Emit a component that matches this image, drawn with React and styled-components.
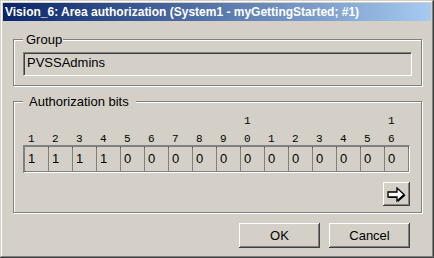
import React from 'react';
import styled, { createGlobalStyle } from 'styled-components';

const GlobalStyle = createGlobalStyle`
  html, body {
    margin: 0;
    padding: 0;
    background: #d4d0c8;
  }
  body {
    font-family: 'Liberation Sans', Arial, sans-serif;
  }
`;

const bits = [1, 1, 1, 1, 0, 0, 0, 0, 0, 0, 0, 0, 0, 0, 0, 0];

// only bits 10 and 16 carry the tens digit above
const upperDigit = (n) => (n === 10 || n === 16 ? '1' : '');
const lowerDigit = (n) => String(n % 10);

// Vision_6 dialog: area authorization
const App = () => {
  return (
    <>
      <GlobalStyle />
      <Window>
        <TitleBar>Vision_6: Area authorization (System1 - myGettingStarted; #1)</TitleBar>
        <Body>
          <GroupBox $pad='12px 9px 9px 9px'>
            <Legend $pad='0 1px 0 3px'>Group</Legend>
            <ReadOnlyField>PVSSAdmins</ReadOnlyField>
          </GroupBox>

          <GroupBox $pad='13px 11px 6px 9px' $mt='15px'>
            <Legend $pad='0 7px 0 6px'>Authorization bits</Legend>
            <BitLabels>
              <LabelRow>
                {bits.map((b, i) => (
                  <BitLabel key={i}>{upperDigit(i + 1)}</BitLabel>
                ))}
              </LabelRow>
              <LabelRow>
                {bits.map((b, i) => (
                  <BitLabel key={i}>{lowerDigit(i + 1)}</BitLabel>
                ))}
              </LabelRow>
            </BitLabels>
            <BitTable>
              {bits.map((b, i) => (
                <BitCell key={i}>{b}</BitCell>
              ))}
            </BitTable>
            <ArrowRow>
              <ArrowButton>
                <svg width='20' height='16' viewBox='0 0 20 16'>
                  <path
                    d='M2 6 H11 V2 L18.5 8.5 L11 15 V11 H2 Z'
                    fill='#000'
                  />
                  <path
                    d='M1 5 H10 V1 L17 7.5 L10 14 V10 H1 Z'
                    fill='#fff'
                    stroke='#000'
                    strokeWidth='1.3'
                    strokeLinejoin='miter'
                  />
                </svg>
              </ArrowButton>
            </ArrowRow>
          </GroupBox>

          <ButtonRow>
            <PushButton>OK</PushButton>
            <PushButton>Cancel</PushButton>
          </ButtonRow>
        </Body>
      </Window>
    </>
  );
};

const Window = styled.div`
  width: 434px;
  height: 258px;
  box-sizing: border-box;
  padding: 3px;
  background: #d4d0c8;
  display: flex;
  flex-direction: column;
  box-shadow: inset -1px -1px #404040, inset 1px 1px #d4d0c8,
    inset -2px -2px #808080, inset 2px 2px #ffffff;
`;

const TitleBar = styled.div`
  height: 18px;
  flex: none;
  padding-left: 2px;
  background: linear-gradient(to right, #0a246a, #a6caf0);
  color: #ffffff;
  font-family: 'Liberation Sans', Arial, sans-serif;
  font-weight: bold;
  font-size: 12px;
  line-height: 18px;
  white-space: nowrap;
  overflow: hidden;
`;

const Body = styled.div`
  flex: 1;
  display: flex;
  flex-direction: column;
  padding: 18px 9px 8px 10px;
`;

const GroupBox = styled.div`
  position: relative;
  margin-top: ${(p) => p.$mt || '0'};
  padding: ${(p) => p.$pad};
  border: 1px solid #808080;
  box-shadow: inset 1px 1px #ffffff, 1px 1px #ffffff;
  display: flex;
  flex-direction: column;
`;

const Legend = styled.span`
  position: absolute;
  top: -9px;
  left: 9px;
  padding: ${(p) => p.$pad};
  background: #d4d0c8;
  color: #000;
  font-size: 13px;
  line-height: 17px;
`;

const ReadOnlyField = styled.div`
  height: 24px;
  box-sizing: border-box;
  padding: 0 3px;
  background: #d4d0c8;
  color: #000;
  font-size: 13px;
  line-height: 20px;
  border-top: 1px solid #808080;
  border-left: 1px solid #808080;
  border-bottom: 1px solid #ffffff;
  border-right: 1px solid #ffffff;
  box-shadow: inset 1px 1px #404040, inset -1px -1px #d4d0c8;
`;

const BitLabels = styled.div`
  display: flex;
  flex-direction: column;
  gap: 6px;
  padding-left: 2px;
`;

const LabelRow = styled.div`
  display: grid;
  grid-template-columns: repeat(16, 24px);
  height: 12px;
`;

const BitLabel = styled.span`
  padding-left: 3px;
  font-family: 'Liberation Mono', 'Courier New', monospace;
  font-size: 11px;
  line-height: 12px;
  color: #000;
`;

const BitTable = styled.div`
  display: grid;
  grid-template-columns: repeat(16, 23px);
  column-gap: 1px;
  width: max-content;
  background: #808080;
  border-top: 2px solid;
  border-left: 2px solid;
  border-color: #808080;
  border-bottom: 1px solid #ffffff;
  border-right: 1px solid #ffffff;
  box-shadow: inset 1px 1px #404040;
  padding: 0 1px 1px 0;
`;

const BitCell = styled.div`
  height: 24px;
  padding-left: 3px;
  background: #d4d0c8;
  font-size: 13px;
  line-height: 24px;
  color: #000;
`;

const ArrowRow = styled.div`
  display: flex;
  justify-content: flex-end;
  margin-top: 9px;
`;

const raised = `
  border: none;
  background: #d4d0c8;
  box-shadow: inset -1px -1px #404040, inset 1px 1px #ffffff,
    inset -2px -2px #808080, inset 2px 2px #d4d0c8;
`;

const ArrowButton = styled.button`
  ${raised}
  width: 27px;
  height: 24px;
  padding: 0;
  display: flex;
  align-items: center;
  justify-content: center;
  svg {
    display: block;
    margin: 1px 0 0 1px;
  }
`;

const ButtonRow = styled.div`
  display: flex;
  justify-content: flex-end;
  gap: 9px;
  margin-top: 10px;
  padding-right: 12px;
`;

const PushButton = styled.button`
  ${raised}
  width: 81px;
  height: 25px;
  padding: 0;
  font-family: 'Liberation Sans', Arial, sans-serif;
  font-size: 13px;
  color: #000;
`;

export default App;
